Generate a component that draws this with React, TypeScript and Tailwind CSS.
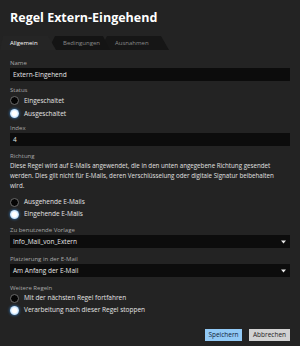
import React from 'react';

const Label: React.FC<{ text: string; className?: string }> = ({ text, className }) => (
  <div className={`h-[8px] text-[6px] leading-[8px] text-[#a8a8a8] ${className ?? ''}`}>{text}</div>
);

const Field: React.FC<{ value: string; select?: boolean; className?: string }> = ({ value, select, className }) => (
  <div
    className={`flex h-[13px] items-center justify-between bg-[#0c0c0c] pl-[3px] pr-[4px] text-[6.5px] text-[#e6e6e6] ${className ?? ''}`}
  >
    <span>{value}</span>
    {select && (
      <svg width="5" height="4" viewBox="0 0 5 4">
        <path d="M0 0.5 L5 0.5 L2.5 3.5 Z" fill="#e8e8e8" />
      </svg>
    )}
  </div>
);

const Radio: React.FC<{ label: string; checked?: boolean; className?: string }> = ({ label, checked, className }) => (
  <div className={`flex items-center gap-[5px] ${className ?? ''}`}>
    {checked ? (
      <span className="h-[9px] w-[9px] rounded-full bg-[radial-gradient(circle,#ffffff_35%,#bfe0ff_65%,#5aa8f0_100%)] shadow-[0_0_3px_#3b8fe0]" />
    ) : (
      <span className="h-[9px] w-[9px] rounded-full border border-[#6a6a6a] bg-[#050505]" />
    )}
    <span className="text-[6.5px] leading-[8px] text-[#e4e4e4]">{label}</span>
  </div>
);

export default function App() {
  return (
    <div className="flex h-[346px] w-[300px] flex-col bg-[#232323] font-['Open_Sans','Noto_Sans',sans-serif]">
      <div className="px-[10px] pt-[10px] text-[12.5px] font-bold leading-[16px] text-white">Regel Extern-Eingehend</div>

      {/* tabs */}
      <div className="mt-[10px] flex h-[14px]">
        <div className="relative z-30 flex w-[56px] items-center bg-[#252525] pl-[10px] text-[6px] text-white [clip-path:polygon(3px_0,48px_0,56px_100%,0_100%)]">
          Allgemein
        </div>
        <div className="relative z-20 -ml-[8px] flex w-[62px] items-center bg-[#141414] pl-[15px] text-[6px] text-[#8a8a8a] [clip-path:polygon(0_100%,7px_0,55px_0,62px_100%)]">
          Bedingungen
        </div>
        <div className="relative z-10 -ml-[10px] flex w-[69px] items-center bg-[#161616] pl-[15px] text-[6px] text-[#8a8a8a] [clip-path:polygon(0_100%,7px_0,61px_0,69px_100%)]">
          Ausnahmen
        </div>
      </div>

      <div className="flex flex-1 flex-col px-[10px] pt-[9px]">
        <Label text="Name" />
        <Field value="Extern-Eingehend" className="mt-[1px]" />

        <Label text="Status" className="mt-[5px]" />
        <Radio label="Eingeschaltet" className="h-[13px]" />
        <Radio label="Ausgeschaltet" checked className="h-[13px]" />

        <Label text="Index" className="mt-[4px]" />
        <Field value="4" className="mt-[1px]" />

        <Label text="Richtung" className="mt-[6px]" />
        <p className="mt-[1px] text-[6.2px] leading-[10px] text-[#e0e0e0]">
          Diese Regel wird auf E-Mails angewendet, die in den unten angegebene Richtung gesendet
          <br />
          werden. Dies gilt nicht für E-Mails, deren Verschlüsselung oder digitale Signatur beibehalten
          <br />
          wird.
        </p>
        <Radio label="Ausgehende E-Mails" className="mt-[5px] h-[12px]" />
        <Radio label="Eingehende E-Mails" checked className="h-[12px]" />

        <Label text="Zu benutzende Vorlage" className="mt-[6px]" />
        <Field value="Info_Mail_von_Extern" select className="mt-[1px] h-[12px]" />

        <Label text="Platzierung in der E-Mail" className="mt-[7px]" />
        <Field value="Am Anfang der E-Mail" select className="mt-[1px] h-[12px]" />

        <Label text="Weitere Regeln" className="mt-[7px]" />
        <Radio label="Mit der nächsten Regel fortfahren" className="h-[12px]" />
        <Radio label="Verarbeitung nach dieser Regel stoppen" checked className="h-[12px]" />

        <div className="mt-[13px] flex justify-end gap-[7px]">
          <button className="h-[12px] w-[37px] bg-[#92c9f5] text-[6.5px] text-[#10243a]">Speichern</button>
          <button className="h-[12px] w-[41px] bg-[#d2d2d2] text-[6.5px] text-[#1c1c1c]">Abbrechen</button>
        </div>
      </div>
    </div>
  );
}
